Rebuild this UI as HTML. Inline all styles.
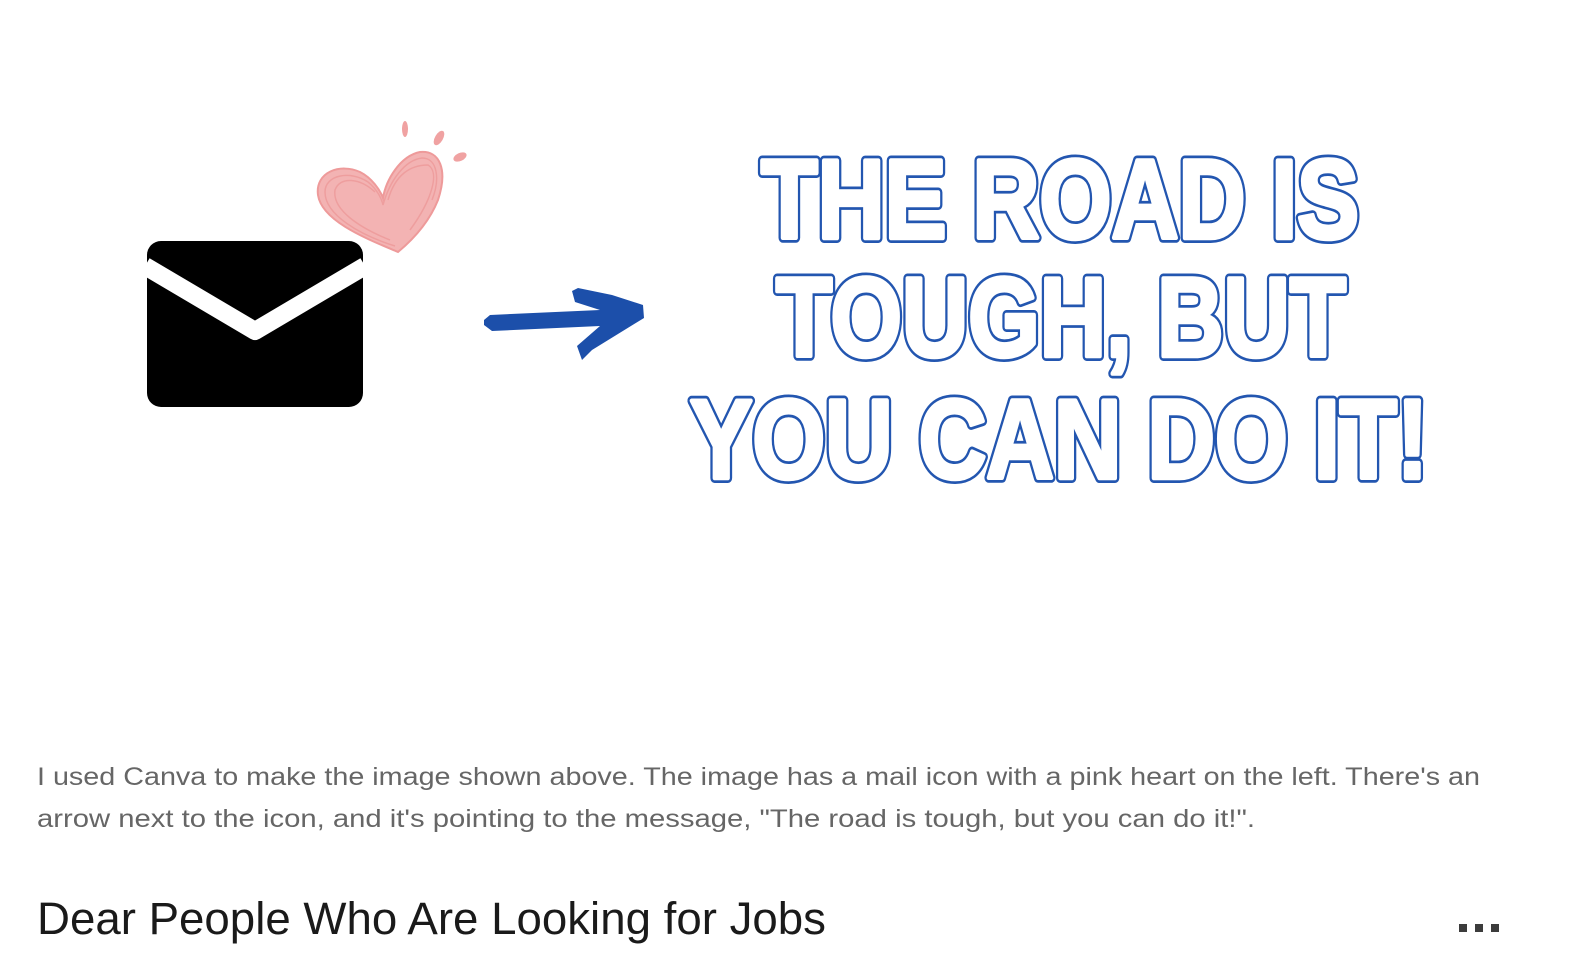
<!DOCTYPE html>
<html><head><meta charset="utf-8"><style>
html,body{margin:0;padding:0;background:#fff;width:1572px;height:974px;overflow:hidden}
svg{display:block}
</style></head><body>
<svg width="1572" height="974" viewBox="0 0 1572 974" xmlns="http://www.w3.org/2000/svg">
<defs>
<g id="bt" font-family="Liberation Sans, sans-serif" font-weight="bold" font-size="112">
<text x="761" y="238" textLength="598" lengthAdjust="spacingAndGlyphs">THE ROAD IS</text>
<text x="776" y="356" textLength="570" lengthAdjust="spacingAndGlyphs">TOUGH, BUT</text>
<text x="690" y="478" textLength="738" lengthAdjust="spacingAndGlyphs">YOU CAN DO IT!</text>
</g>
</defs>
<!-- heart -->
<g fill="#f0a2a2" stroke="none">
<ellipse cx="405" cy="129" rx="3" ry="8"/>
<ellipse cx="439" cy="138" rx="4" ry="8" transform="rotate(30 439 138)"/>
<ellipse cx="460" cy="157" rx="4" ry="7" transform="rotate(65 460 157)"/>
</g>
<path d="M398 252 C370 240 322 222 318 195 C315 172 340 163 360 172 C372 178 380 190 383 198 C386 180 400 156 420 152 C440 150 448 170 438 200 C428 225 410 242 398 252 Z" fill="#f3b3b3" stroke="#ee9a9a" stroke-width="2"/>
<g fill="none" stroke="#ee9a9a" stroke-width="1.5" opacity="0.8">
<path d="M395 246 C360 235 325 215 325 192 C325 175 350 170 368 182 C378 190 382 200 383 205 C390 180 405 160 422 158 C438 158 440 180 432 200"/>
<path d="M390 240 C360 228 332 210 335 190 C340 176 360 178 375 192 M388 200 C395 175 410 165 428 165 C440 172 432 200 410 230"/>
</g>
<!-- envelope -->
<rect x="147" y="241" width="216" height="166" rx="14" fill="#000"/>
<polyline points="145,266 255,331 365,266" fill="none" stroke="#fff" stroke-width="18" stroke-linejoin="round"/>
<!-- arrow -->
<polygon points="484,320 490,315 600,310 575,302 572,291 578,288 612,295 643,305 644,318 592,350 582,360 577,346 600,326 492,331 484,325" fill="#1c4faa"/>
<!-- big outlined text -->
<use href="#bt" fill="#2356b0" stroke="#2356b0" stroke-width="10" stroke-linejoin="round"/>
<use href="#bt" fill="#fff" stroke="#fff" stroke-width="4.5" stroke-linejoin="round"/>
<!-- caption -->
<g font-family="Liberation Sans, sans-serif" font-size="25" fill="#666">
<text x="37" y="785" textLength="1443" lengthAdjust="spacingAndGlyphs">I used Canva to make the image shown above. The image has a mail icon with a pink heart on the left. There's an</text>
<text x="37" y="827" textLength="1218" lengthAdjust="spacingAndGlyphs">arrow next to the icon, and it's pointing to the message, "The road is tough, but you can do it!".</text>
</g>
<text x="37" y="934" font-family="Liberation Sans, sans-serif" font-size="45" fill="#1a1a1a" textLength="789" lengthAdjust="spacingAndGlyphs">Dear People Who Are Looking for Jobs</text>
<g fill="#3c3c3c">
<rect x="1459" y="924" width="8" height="8"/>
<rect x="1475" y="924" width="8" height="8"/>
<rect x="1491" y="924" width="8" height="8"/>
</g>
</svg>
</body></html>
